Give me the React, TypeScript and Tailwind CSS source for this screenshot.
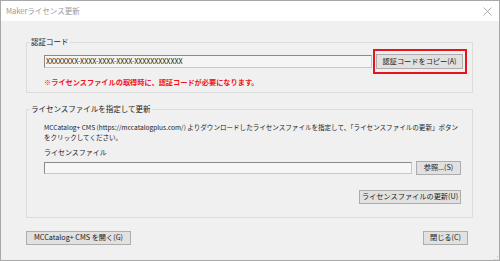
const font = { fontFamily: '"Noto Sans CJK JP", "Noto Sans", sans-serif' }

function Button({
  children,
  className = "",
}: Readonly<{
  children: React.ReactNode
  className?: string
}>) {
  return (
    <div
      className={`flex h-[14px] items-center justify-center whitespace-nowrap border border-[#adadad] bg-[#e1e1e1] text-[7.2px] leading-none text-[#1a1a1a] ${className}`}
    >
      {children}
    </div>
  )
}

function GroupBox({
  label,
  className = "",
  children,
}: Readonly<{
  label: string
  className?: string
  children: React.ReactNode
}>) {
  return (
    <fieldset
      className={`m-0 min-w-0 border border-[#dcdcdc] p-0 ${className}`}
    >
      <legend className="ml-[3px] px-[1px] text-[7.5px] leading-[8px] text-[#1a1a1a]">
        {label}
      </legend>
      {children}
    </fieldset>
  )
}

export default function App() {
  return (
    <div
      className="flex h-[261px] w-[500px] flex-col overflow-hidden border border-[#a8a8a8] bg-[#f0f0f0]"
      style={font}
    >
      {/* title bar */}
      <div className="flex h-[20px] shrink-0 items-center justify-between bg-white pl-[5px] pr-[6px]">
        <span className="text-[7.5px] text-[#9a9a9a]">Makerライセンス更新</span>
        <svg width="9" height="9" viewBox="0 0 9 9" className="mr-[1px]">
          <path d="M0.5 0.5 L8.5 8.5 M8.5 0.5 L0.5 8.5" stroke="#a0a0a0" strokeWidth="0.9" />
        </svg>
      </div>

      <div className="flex flex-1 flex-col pl-[25px] pr-[26px] pt-[17px]">
        {/* 認証コード */}
        <GroupBox label="認証コード" className="h-[55px]">
          <div className="flex items-center pl-[17px] pt-[3px]">
            <div className="flex h-[13px] w-[328px] items-center border border-[#8a8a8a] border-b-[#c8c8c8] border-r-[#c8c8c8] bg-[#f5f5f5] pl-[1px] text-[7.2px] leading-none tracking-[-0.1px] text-[#222]">
              XXXXXXXX-XXXX-XXXX-XXXX-XXXXXXXXXXXX
            </div>
            <div className="ml-[1px] flex h-[25px] w-[94px] items-center border-2 border-[#e8141b] pl-[1px]">
              <Button className="h-[15px] w-[87px]">認証コードをコピー(A)</Button>
            </div>
          </div>
          <div className="pl-[17px] pt-[5px] text-[7.2px] font-bold leading-none text-[#f0141b]">
            ※ライセンスファイルの取得時に、認証コードが必要になります。
          </div>
        </GroupBox>

        {/* ライセンスファイル指定 */}
        <GroupBox label="ライセンスファイルを指定して更新" className="mt-[12px] h-[113px]">
          <div className="whitespace-nowrap pl-[17px] pt-[10px] text-[6.55px] leading-[9.5px] text-[#222]">
            MCCatalog+ CMS (https://mccatalogplus.com/) よりダウンロードしたライセンスファイルを指定して、「ライセンスファイルの更新」ボタン
            <br />
            をクリックしてください。
          </div>
          <div className="pl-[17px] pt-[7px] text-[7px] leading-none text-[#222]">
            ライセンスファイル
          </div>
          <div className="flex items-center gap-[4px] pl-[17px] pt-[5px]">
            <div className="h-[12px] w-[368px] border border-[#8a8a8a] border-b-[#c8c8c8] border-r-[#c8c8c8] bg-[#f7f7f7]" />
            <Button className="h-[13px] w-[45px]">参照...(S)</Button>
          </div>
          <div className="flex justify-end pr-[11px] pt-[15px]">
            <Button className="h-[13px] w-[102px]">ライセンスファイルの更新(U)</Button>
          </div>
        </GroupBox>

        {/* bottom buttons */}
        <div className="flex items-center justify-between pr-[5px] pt-[13px]">
          <Button className="h-[14px] w-[105px]">MCCatalog+ CMS を開く(G)</Button>
          <Button className="h-[14px] w-[45px]">閉じる(C)</Button>
        </div>
      </div>
      <div className="flex h-[4px] shrink-0 justify-end pr-[1px]">
        <svg width="4" height="4" viewBox="0 0 4 4">
          <rect x="3" y="0" width="1" height="1" fill="#bbb" />
          <rect x="3" y="3" width="1" height="1" fill="#bbb" />
          <rect x="0" y="3" width="1" height="1" fill="#bbb" />
        </svg>
      </div>
    </div>
  )
}
